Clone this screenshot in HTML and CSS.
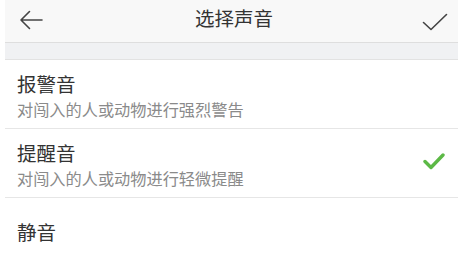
FILE: index.html
```html
<!DOCTYPE html>
<html lang="zh-CN">
<head>
<meta charset="utf-8">
<link rel="stylesheet" href="styles.css">
</head>
<body>
<div class="page">
  <header class="topbar">
    <svg class="back" width="24" height="20" viewBox="0 0 24 20"><path d="M23 10H2M10.5 1.5L2 10l8.5 8.5" fill="none" stroke="#444" stroke-width="1.6" stroke-linecap="round" stroke-linejoin="round"/></svg>
    <div class="title">选择声音</div>
    <svg class="ok" width="26" height="18" viewBox="0 0 26 18"><path d="M1.5 9.5l7.5 7L24.5 1.5" fill="none" stroke="#444" stroke-width="1.6" stroke-linecap="round" stroke-linejoin="round"/></svg>
  </header>
  <div class="band"></div>
  <ul class="list">
    <li class="item">
      <div class="text">
        <div class="name">报警音</div>
        <div class="desc">对闯入的人或动物进行强烈警告</div>
      </div>
    </li>
    <li class="item">
      <div class="text">
        <div class="name">提醒音</div>
        <div class="desc">对闯入的人或动物进行轻微提醒</div>
      </div>
      <svg class="tick" width="22" height="17" viewBox="0 0 22 17"><path d="M2 8.5l6 6L20 2" fill="none" stroke="#5cb946" stroke-width="3.4" stroke-linecap="round" stroke-linejoin="round"/></svg>
    </li>
    <li class="item single">
      <div class="text">
        <div class="name">静音</div>
      </div>
    </li>
  </ul>
</div>
</body>
</html>
```
FILE: styles.css
```css
html, body {
  margin: 0;
  padding: 0;
  background: #ffffff;
}
body {
  font-family: "Noto Sans CJK SC", "Noto Sans", sans-serif;
  overflow: hidden;
}
.page {
  margin-left: 5px;
  width: 453px;
}
.topbar {
  height: 42px;
  background: #f8f8f8;
  border-bottom: 1px solid #dedede;
  display: flex;
  align-items: center;
  justify-content: space-between;
  padding: 0 10px 0 14px;
  position: relative;
}
.back { display: block; margin-top: -2px; }
.ok { display: block; margin-top: 1px; }
.title {
  position: absolute;
  left: 5px;
  right: 0;
  top: 0;
  line-height: 36px;
  text-align: center;
  font-size: 19.5px;
  color: #333;
  pointer-events: none;
}
.band {
  height: 16px;
  background: #f0f1f3;
  border-bottom: 1px solid #e2e2e2;
}
.list {
  list-style: none;
  margin: 0;
  padding: 0;
}
.item {
  display: flex;
  align-items: center;
  justify-content: space-between;
  padding: 13px 12px 9px 12px;
  border-bottom: 1px solid #e6e6e6;
}
.item.single {
  min-height: 68px;
  padding-top: 0;
  padding-bottom: 0;
  border-bottom: none;
}
.name {
  font-size: 19.5px;
  line-height: 22px;
  color: #333;
}
.desc {
  margin-top: 4px;
  font-size: 16.2px;
  line-height: 20px;
  color: #8a8a8a;
}
.tick {
  display: block;
  margin-right: 1px;
  margin-top: -7px;
}
```
